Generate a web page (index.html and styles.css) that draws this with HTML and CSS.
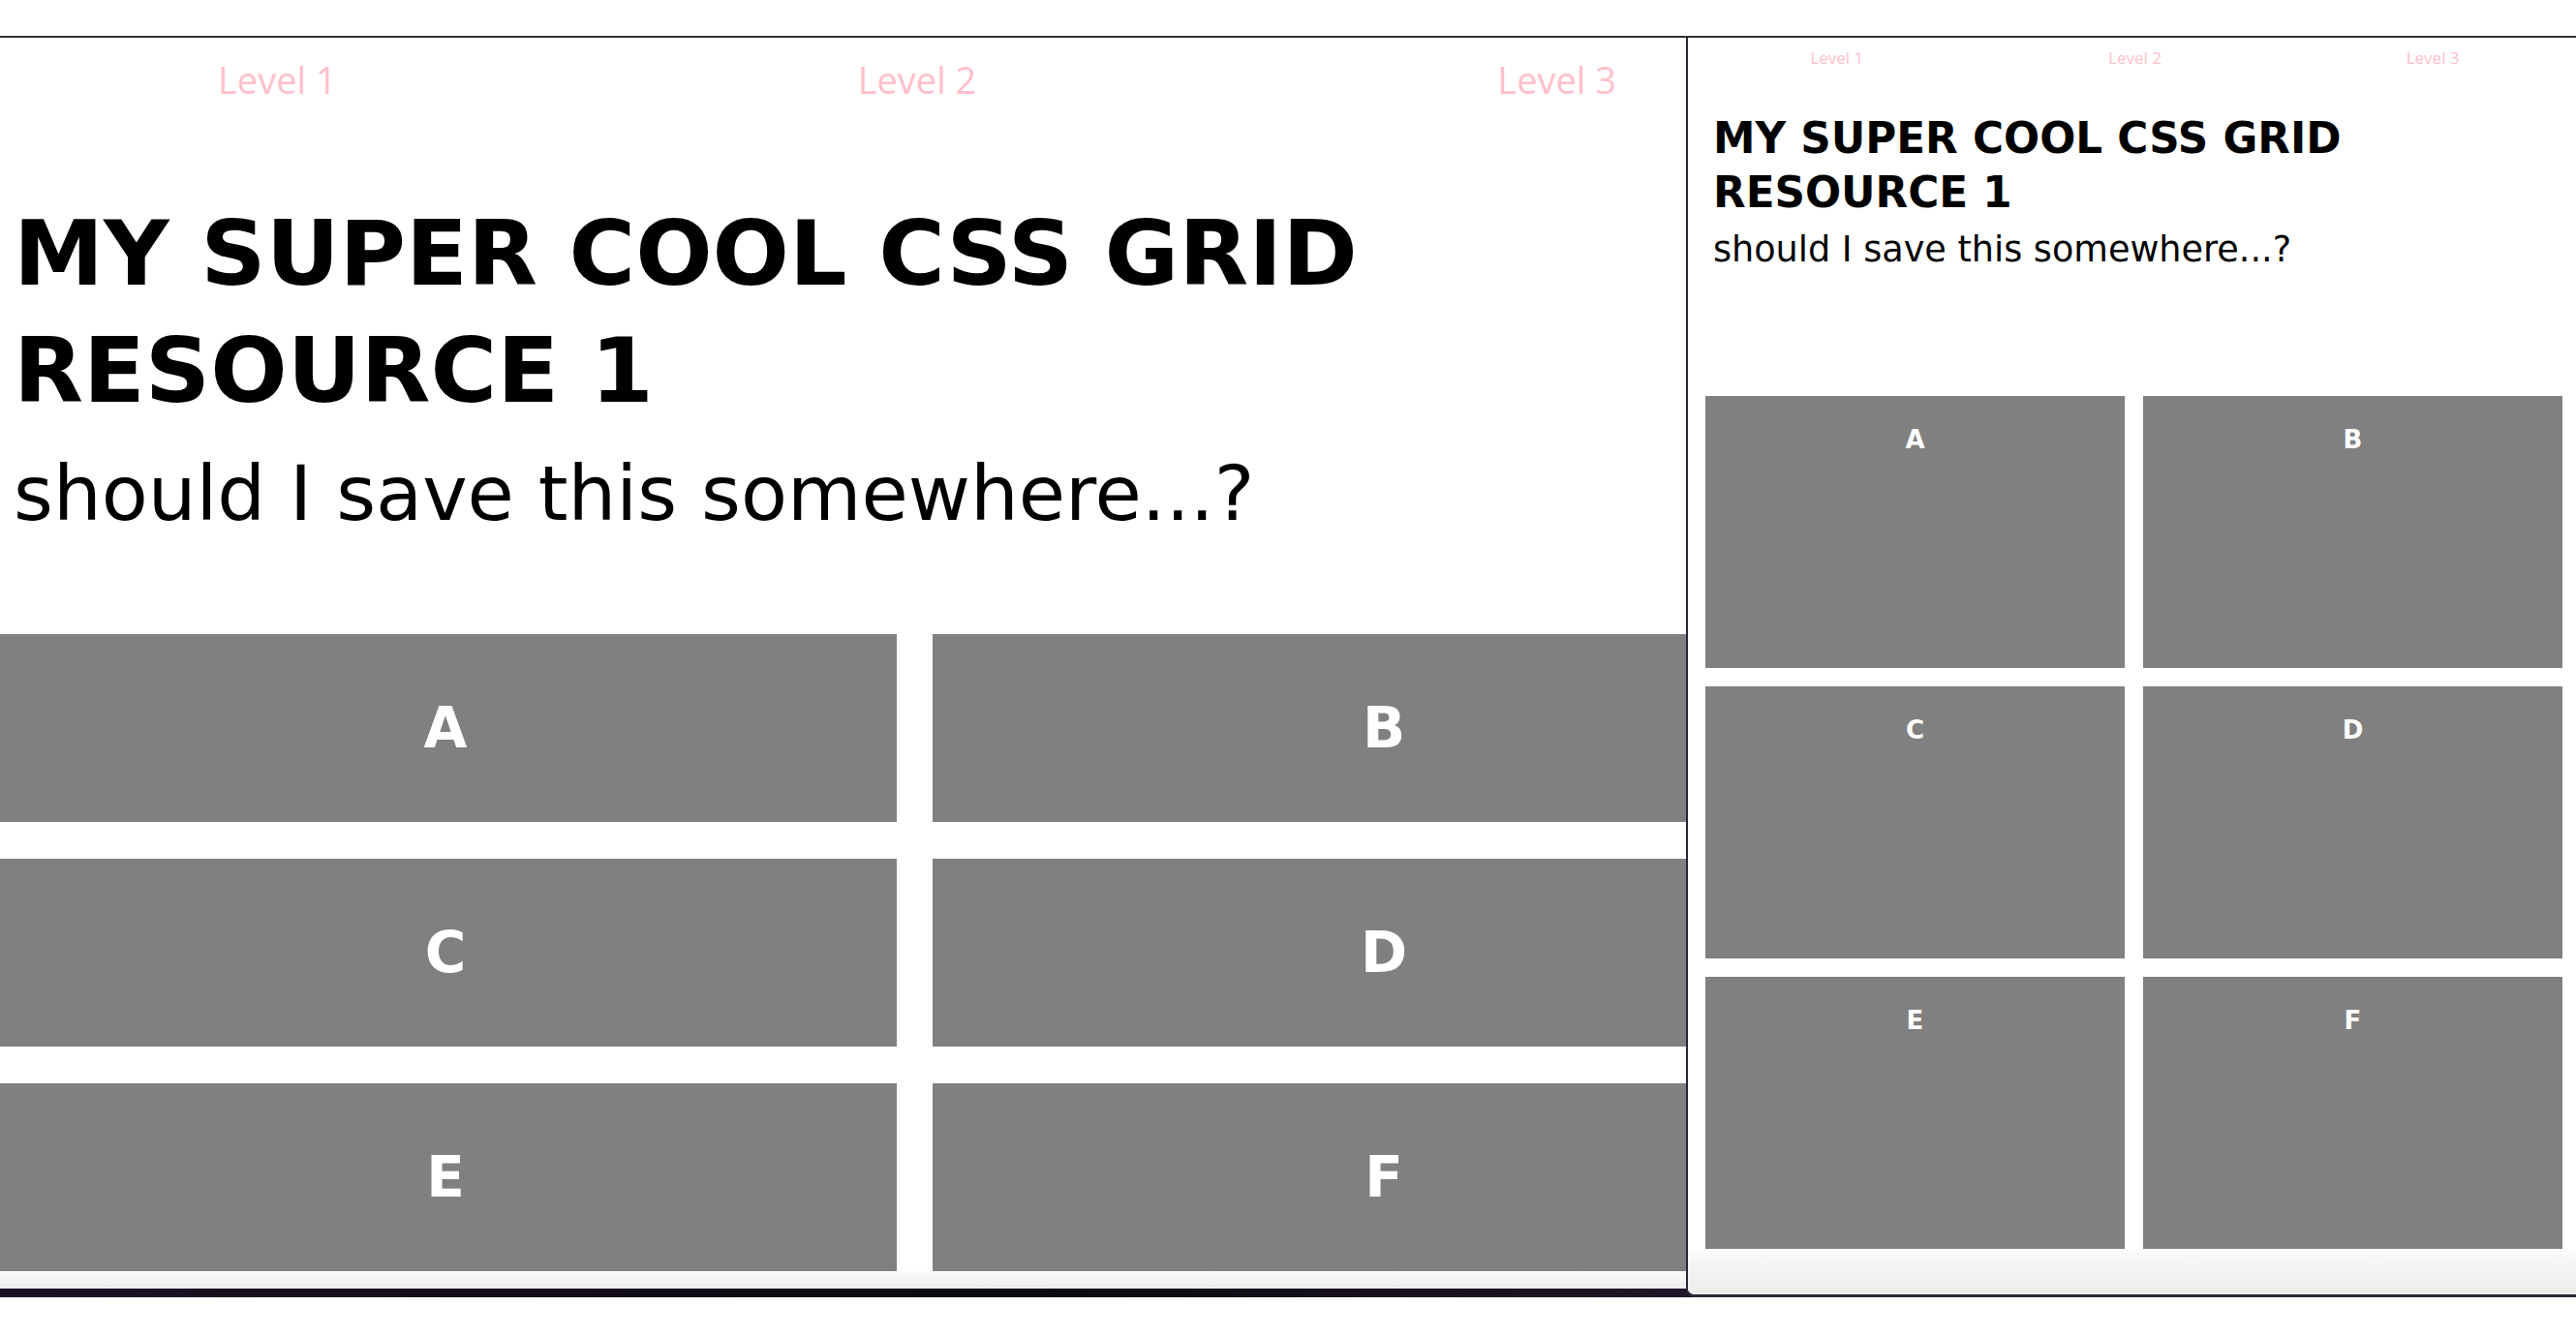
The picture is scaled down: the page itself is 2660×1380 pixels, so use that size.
FILE: index.html
```html
<!DOCTYPE html>
<html lang="en">
<head>
<meta charset="utf-8">
<title>CSS Grid Resource</title>
<link rel="stylesheet" href="styles.css">
</head>
<body>
<div class="desktop">
  <section class="win win-wide">
    <nav class="levels">
      <a class="level">Level 1</a>
      <a class="level">Level 2</a>
      <a class="level">Level 3</a>
    </nav>
    <header class="intro">
      <h1 class="title">MY SUPER COOL CSS GRID RESOURCE 1</h1>
      <p class="subtitle">should I save this somewhere...?</p>
    </header>
    <div class="grid">
      <div class="cell">A</div>
      <div class="cell">B</div>
      <div class="cell">C</div>
      <div class="cell">D</div>
      <div class="cell">E</div>
      <div class="cell">F</div>
    </div>
    <div class="win-foot"></div>
  </section>

  <section class="win win-narrow">
    <nav class="levels">
      <a class="level">Level 1</a>
      <a class="level">Level 2</a>
      <a class="level">Level 3</a>
    </nav>
    <header class="intro">
      <h1 class="title">MY SUPER COOL CSS GRID RESOURCE 1</h1>
      <p class="subtitle">should I save this somewhere...?</p>
    </header>
    <div class="grid">
      <div class="cell">A</div>
      <div class="cell">B</div>
      <div class="cell">C</div>
      <div class="cell">D</div>
      <div class="cell">E</div>
      <div class="cell">F</div>
    </div>
    <div class="win-foot"></div>
  </section>
</div>
</body>
</html>
```

FILE: styles.css
```css
html, body {
  margin: 0;
  padding: 0;
  background: #ffffff;
}

body {
  width: 2660px;
  height: 1380px;
  overflow: hidden;
  font-family: "DejaVu Sans", sans-serif;
  color: #000;
}

.desktop {
  position: relative;
  margin-top: 37px;
  height: 1303px;
  background: linear-gradient(90deg, #1a1224, #0c0a10 40%, #221a2c 70%, #0e0b12);
}

.win {
  position: absolute;
  top: 0;
  display: flex;
  flex-direction: column;
  background: #ffffff;
  border-top: 2px solid #303030;
  box-sizing: border-box;
  overflow: hidden;
}

.levels {
  display: grid;
  grid-template-columns: repeat(3, 1fr);
  font-family: "Open Sans", sans-serif;
  color: #ffc0cb;
}

.level {
  text-align: center;
}

.title {
  margin: 0;
  font-weight: bold;
}

.subtitle {
  margin: 0;
  font-weight: normal;
}

.grid {
  display: grid;
}

.cell {
  background: #808080;
  color: #ffffff;
  font-weight: bold;
  text-align: center;
}

.win-foot {
  flex: 1;
  background: linear-gradient(#fbfbfb, #ececec);
}

/* wide (zoomed) window, partly covered */
.win-wide {
  left: -44px;
  width: 1982px;
  height: 1294px;
  z-index: 1;
}

.win-wide .levels {
  padding-top: 17px;
  font-size: 38px;
  line-height: 52px;
}

.win-wide .intro {
  padding-left: 58px;
}

.win-wide .title {
  margin-top: 93px;
  max-width: 1500px;
  font-size: 93.5px;
  line-height: 121px;
}

.win-wide .subtitle {
  margin-top: 22px;
  font-size: 78.5px;
  line-height: 90px;
}

.win-wide .grid {
  margin-top: 100px;
  padding-left: 38px;
  grid-template-columns: 932px 932px;
  grid-auto-rows: 194px;
  column-gap: 37px;
  row-gap: 38px;
}

.win-wide .cell {
  display: flex;
  align-items: center;
  justify-content: center;
  font-size: 58px;
}

/* narrow window on top */
.win-narrow {
  left: 1741px;
  width: 925px;
  height: 1303px;
  z-index: 2;
  border-left: 2px solid #2b2836;
  border-bottom: 3px solid #2b2836;
  border-bottom-left-radius: 9px;
}

.win-narrow .levels {
  padding-top: 9px;
  font-size: 17px;
  line-height: 24px;
}

.win-narrow .intro {
  padding-left: 26px;
}

.win-narrow .title {
  margin-top: 43px;
  max-width: 720px;
  font-size: 43.7px;
  line-height: 56px;
}

.win-narrow .subtitle {
  margin-top: 10px;
  font-size: 36.6px;
  line-height: 42px;
}

.win-narrow .grid {
  margin-top: 130px;
  padding-left: 18px;
  grid-template-columns: 433px 433px;
  grid-auto-rows: 281px;
  column-gap: 19px;
  row-gap: 19px;
}

.win-narrow .cell {
  padding-top: 30px;
  font-size: 26px;
  line-height: 30px;
}
```
